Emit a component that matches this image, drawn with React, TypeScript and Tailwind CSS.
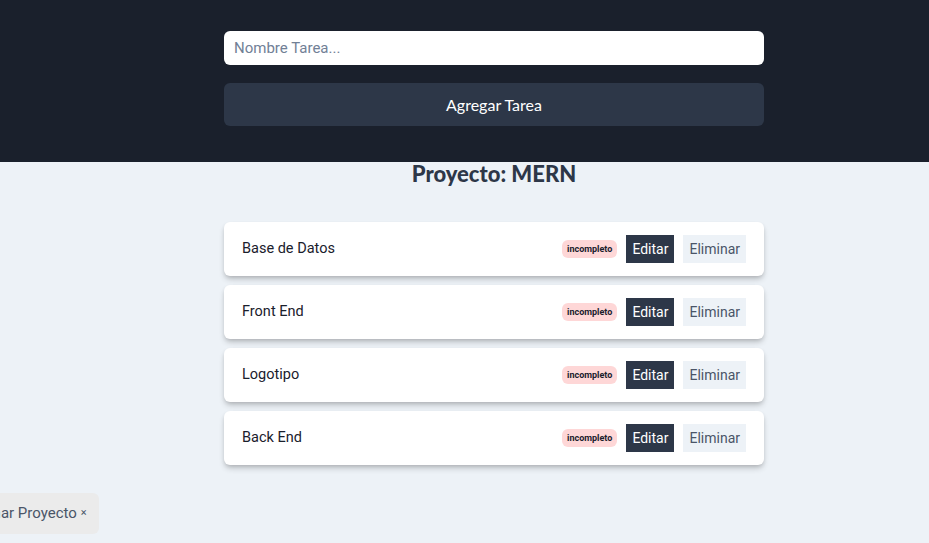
import React from "react";

const tareas = ["Base de Datos", "Front End", "Logotipo", "Back End"];

function TareaItem({ nombre }: { nombre: string }) {
  return (
    <li className="flex items-center justify-between bg-white rounded-md shadow-[0_4px_6px_-1px_rgba(0,0,0,0.2),0_2px_4px_-1px_rgba(0,0,0,0.12)] px-[18px] py-[13px]">
      <p className="text-[14.5px] text-[#1a202c]">{nombre}</p>
      <div className="flex items-center">
        <span className="bg-[#fed7d7] text-[#1a202c] text-[9px] font-bold rounded-md px-[5px] py-[3px] leading-[12px]">
          incompleto
        </span>
        <button className="ml-[9px] bg-[#2d3748] text-white text-[14px] h-[28px] px-[6px] leading-[28px]">
          Editar
        </button>
        <button className="ml-[9px] bg-[#edf2f7] text-[#4a5568] text-[14px] h-[28px] px-[6px] leading-[28px]">
          Eliminar
        </button>
      </div>
    </li>
  );
}

export default function App() {
  return (
    <div className="min-h-[543px] bg-[#edf2f7] overflow-hidden font-['Roboto',sans-serif]">
      <header className="bg-[#1a202c] h-[162px] pt-[31px]">
        <form className="w-[540px] ml-[224px]">
          <input
            type="text"
            placeholder="Nombre Tarea..."
            className="w-full h-[34px] bg-white rounded-md px-[10px] text-[15px] text-[#1a202c] placeholder:text-[#718096] outline-none"
          />
          <button
            type="button"
            className="mt-[18px] w-full h-[43px] bg-[#2d3748] rounded-md text-white text-[16px] font-['Lato',sans-serif]"
          >
            Agregar Tarea
          </button>
        </form>
      </header>

      <main className="w-[540px] ml-[224px]">
        <h2 className="text-center text-[22px] font-black text-[#2d3748] leading-[24px] font-['Lato',sans-serif]">
          Proyecto: MERN
        </h2>

        <ul className="mt-[36px] flex flex-col gap-[9px]">
          {tareas.map((t) => (
            <TareaItem key={t} nombre={t} />
          ))}
        </ul>
      </main>

      <div className="mt-[28px] flex">
        <button className="-ml-[50px] h-[41px] bg-[#ebebeb] rounded-md pl-[10px] pr-[12px] text-[15px] text-[#4a5568] flex items-center">
          Eliminar Proyecto
          <span className="ml-[4px] text-[11px]">×</span>
        </button>
      </div>
    </div>
  );
}
